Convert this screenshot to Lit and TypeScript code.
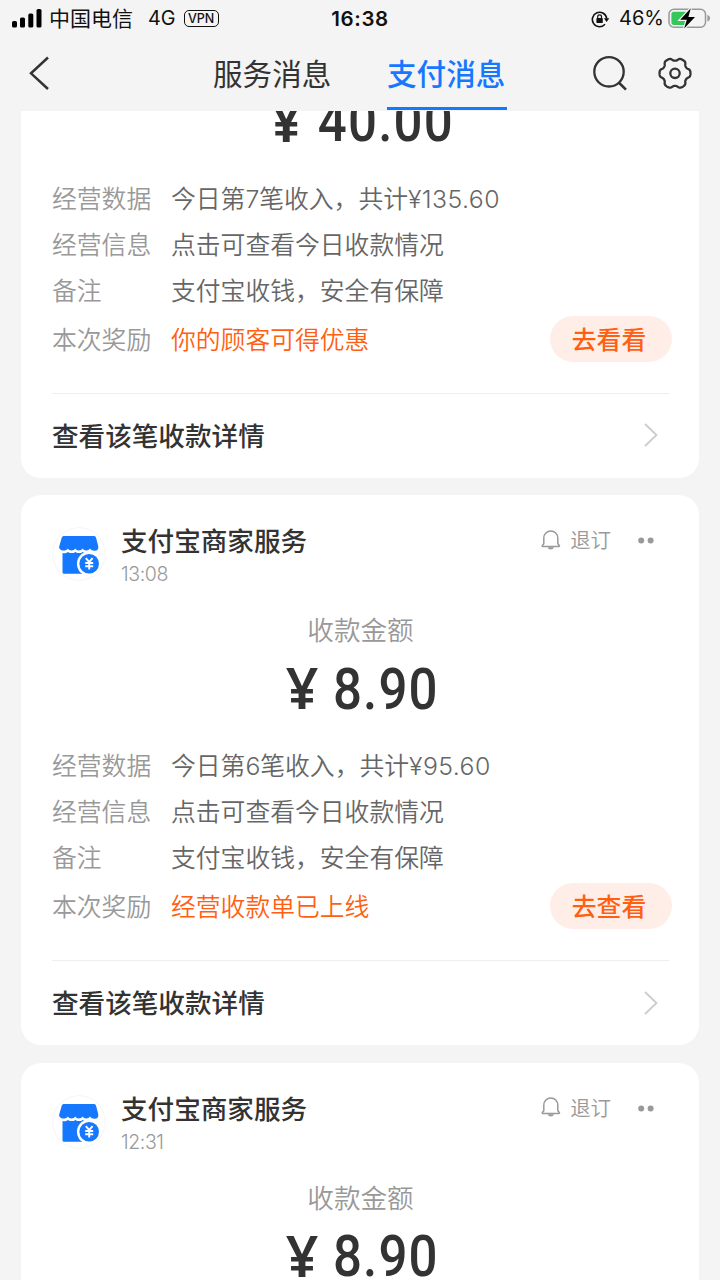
import { LitElement, html, css } from "lit";
import { customElement, property } from "lit/decorators.js";

interface Receipt {
  time: string;
  amount: string;
  summary: string;
  reward: string;
  action: string;
}

const receipts: Receipt[] = [
  { time: "13:26", amount: "40.00", summary: "今日第7笔收入，共计|¥135.60", reward: "你的顾客可得优惠", action: "去看看" },
  { time: "13:08", amount: "8.90", summary: "今日第6笔收入，共计|¥95.60", reward: "经营收款单已上线", action: "去查看" },
  { time: "12:31", amount: "8.90", summary: "今日第5笔收入，共计|¥86.70", reward: "经营收款单已上线", action: "去查看" },
];

/* Gear outline: six wide lobes with narrow notches between them */
const gearPath = (() => {
  let d = "";
  for (let i = 0; i < 180; i++) {
    const a = (i / 180) * Math.PI * 2;
    const r = 13.9 + 1.6 * Math.tanh((Math.cos(6 * a) + 0.3) * 1.6);
    d += `${i ? "L" : "M"}${(17 + r * Math.cos(a)).toFixed(2)} ${(17 + r * Math.sin(a)).toFixed(2)}`;
  }
  return d + "Z";
})();

@customElement("status-bar")
export class StatusBar extends LitElement {
  static styles = css`
    :host { display: flex; height: 37px; align-items: center; box-sizing: border-box; padding: 0 9px 0 12px; color: #111; font-size: 20.5px; }
    svg { display: block; flex: none; }
    .side { flex: 1; display: flex; align-items: center; }
    .right { justify-content: flex-end; }
    .carrier { margin: -3px 0 0 7px; font-size: 21px; line-height: 34px; }
    .net { margin-left: 15px; font: 400 19.8px/37px Inter, sans-serif; }
    .vpn { margin-left: 8px; box-sizing: border-box; width: 35px; height: 17px; border: 1.5px solid #111; border-radius: 5px; font: 500 12.5px/15px Inter, sans-serif; text-align: center; }
    .clock { margin-right: 3px; font: 600 20.5px/37px Inter, sans-serif; letter-spacing: 0.6px; }
    .pct { margin: 0 4px 0 9px; font: 400 20px/37px Inter, sans-serif; }
  `;
  render() {
    return html`
      <div class="side">
        <svg width="30" height="20" viewBox="0 0 30 20" fill="#000">
          <rect x="0" y="12" width="5" height="6.500" rx="1.6" /><rect x="8" y="8.500" width="5" height="10" rx="1.6" />
          <rect x="16.3" y="4.500" width="5" height="14" rx="1.6" /><rect x="24.5" y="0" width="5" height="18.500" rx="1.6" />
        </svg>
        <span class="carrier">中国电信</span><span class="net">4G</span><span class="vpn">VPN</span>
      </div>
      <span class="clock">16:38</span>
      <div class="side right">
        <svg width="19" height="18" viewBox="0 0 19 18" fill="none" stroke="#111" stroke-width="1.6">
          <path d="M14 14.2A7.2 7.2 0 1 1 15.7 8.6" />
          <path d="M12.9 8.3h5.4l-2.700 3.600z" fill="#111" stroke="none" />
          <rect x="5.4" y="8" width="6.4" height="5" rx="0.8" fill="#111" stroke="none" />
          <path d="M6.7 8.4V6.8a1.9 1.9 0 0 1 3.8 0v1.6" stroke-width="1.2" />
        </svg>
        <span class="pct">46%</span>
        <svg width="43" height="22" viewBox="0 0 43 22">
          <rect x="1" y="1.300" width="36.500" height="18" rx="5" fill="none" stroke="#999" stroke-width="1.500" />
          <path d="M6 3.700h12v13.200H6a2.600 2.600 0 0 1-2.600-2.600V6.300A2.600 2.600 0 0 1 6 3.700z" fill="#35c759" />
          <path d="M39.400 7c1.800.6 2.600 1.800 2.600 3.300s-.8 2.700-2.600 3.300z" fill="#999" />
          <path d="M22.800.3 12.200 11.700h6.600l-2.600 8.800L27 8.900h-6.600z" fill="#000" stroke="#f4f4f4" stroke-width="2.400" paint-order="stroke" />
        </svg>
      </div>
    `;
  }
}

@customElement("nav-bar")
export class NavBar extends LitElement {
  static styles = css`
    :host { display: grid; grid-template-columns: 213px 118px 56px 120px 1fr; height: 74px; color: #333; }
    svg { display: block; }
    .back { padding: 19px 0 0 28px; }
    .tab { height: 72.5px; box-sizing: border-box; font-size: 29.6px; line-height: 71px; white-space: nowrap; }
    .active { grid-column: 4; color: #1677ff; font-weight: 500; border-bottom: 3.5px solid #1677ff; }
    .tools { display: flex; justify-content: flex-end; gap: 30px; padding: 18px 28px 0 0; }
  `;
  render() {
    return html`
      <div class="back">
        <svg width="22" height="35" viewBox="0 0 22 35" fill="none" stroke="#333" stroke-width="2.500"><path d="M20 1.500 3 17.300 20 33" /></svg>
      </div>
      <div class="tab">服务消息</div>
      <div class="tab active">支付消息</div>
      <div class="tools">
        <svg width="36" height="36" viewBox="0 0 36 36" fill="none" stroke="#333" stroke-width="2.300"><circle cx="17" cy="16.800" r="14.700" /><path d="M27 27.800 34 34.600" stroke-width="2.600" /></svg>
        <svg width="34" height="36" viewBox="0 -1.300 34 36" fill="none" stroke="#333" stroke-width="2.300" stroke-linejoin="round"><path d=${gearPath} /><circle cx="17" cy="17" r="4.700" /></svg>
      </div>
    `;
  }
}

@customElement("receipt-card")
export class ReceiptCard extends LitElement {
  @property({ attribute: false }) receipt!: Receipt;

  static styles = css`
    :host { display: flex; flex-direction: column; box-sizing: border-box; height: 550px; padding: 27px 30px 0 31px; border-radius: 20px; background: #fff; }
    svg { display: block; flex: none; }
    .head { display: flex; height: 85px; }
    .logo { margin: 5px 15px 0 0; }
    .who { flex: 1; }
    .name { font-size: 26.6px; font-weight: 500; line-height: 36px; color: #333; }
    .time { margin-top: 3px; font: 300 19.5px/27px Inter, sans-serif; color: #999; letter-spacing: -0.4px; }
    .unsub { display: flex; height: 35px; align-items: center; color: #999; font-size: 20.4px; font-weight: 350; }
    .unsub .bell { margin-top: 1px; }
    .unsub .word { margin: -1px 27px 0 9px; }
    .unsub .dots { margin: 1px 15px 0 0; }
    .caption { height: 44px; line-height: 44px; text-align: center; font-size: 26.6px; font-weight: 350; color: #999; }
    .amount { height: 75px; display: flex; justify-content: center; align-items: center; padding-left: 8px; font: 500 58px/74px Roboto, sans-serif; color: #333; transform: scaleX(0.88); }
    .sign { margin: -3px 17px 0 0; font-family: "Noto Sans", sans-serif; font-size: 57px; font-weight: 560; transform: scaleX(1.136); transform-origin: right; }
    .figure { letter-spacing: 1.3px; }
    .row { display: flex; height: 46px; align-items: center; font-size: 24.8px; font-weight: 350; color: #666; white-space: nowrap; line-height: 40px; }
    .first { margin-top: 16px; }
    .label, .value { margin-top: -2px; }
    .label { width: 119px; color: #999; }
    .money, .digit { font-family: Inter, sans-serif; font-weight: 340; line-height: 1; }
    .money { letter-spacing: 0.45px; }
    .digit { letter-spacing: -0.1px; }
    .bonus { margin-top: 3px; color: #ff5f12; }
    .bonus .value { flex: 1; }
    .pill { width: 122px; height: 46px; margin-right: -3px; border-radius: 23px; background: #ffeee8; font-weight: 500; text-align: center; line-height: 45px; text-indent: -4px; }
    .link { display: flex; height: 83px; margin-top: 31px; border-top: 1px solid #eee; justify-content: space-between; align-items: center; padding-right: 11px; font-size: 26.6px; font-weight: 500; color: #333; }
    .link span { margin-top: -2px; }
  `;

  render() {
    const r = this.receipt;
    const [text, money] = r.summary.split("|");
    const [, before, digit, after] = text.match(/^(\D+)(\d)(.*)$/)!;
    return html`
      <div class="head">
        <svg class="logo" width="54" height="54" viewBox="0 0 54 54">
          <circle cx="27" cy="27" r="26.300" fill="#fff" stroke="#f5f5f5" />
          <path d="M12 9h30a2 2 0 0 1 2 1.500L46.300 19.500c.5 3-1.500 4.500-3.800 4.300-2 0-3.500-1-4.500-2.300-1.500 2.600-6 2.600-7.400 0-1.400 2.600-6 2.600-7.400 0-1.400 2.600-6 2.600-7.400 0C14.500 24.500 6.500 24.600 7.200 19.500L9.800 10.500A2 2 0 0 1 12 9z" fill="#1677ff" />
          <path d="M10.500 26c2 .5 4 .1 5.500-1.100 2.200 1.600 5.300 1.600 7.400 0 2.200 1.600 5.300 1.600 7.300 0 2.200 1.600 5.300 1.600 7.300 0 1.500 1.100 3.200 1.500 5 1.200V46.800H12a1.500 1.500 0 0 1-1.500-1.500z" fill="#1677ff" />
          <circle cx="37.200" cy="36.700" r="12.300" fill="#fff" /><circle cx="37.200" cy="36.700" r="9.800" fill="#1677ff" />
          <path d="M33.800 31.200 37.200 35 40.600 31.200M37.200 35V42.600M33.200 36h8M33.200 39.300h8" fill="none" stroke="#fff" stroke-width="1.900" />
        </svg>
        <div class="who">
          <div class="name">支付宝商家服务</div>
          <div class="time">${r.time}</div>
        </div>
        <div class="unsub">
          <svg class="bell" width="20" height="21" viewBox="0 0 20 21" fill="none" stroke="#999" stroke-width="1.500">
            <path d="M2.800 13.800V8a7 7 0 0 1 14 0v5.800l1.500 1.800a.6.6 0 0 1-.5 1H1.800a.6.6 0 0 1-.5-1z" />
            <path d="M6.600 17.200a3.300 2.900 0 0 0 6.400 0z" fill="#999" stroke="none" />
          </svg>
          <span class="word">退订</span>
          <svg class="dots" width="16" height="8" viewBox="0 0 16 8" fill="#999"><circle cx="3.200" cy="4.500" r="3" /><circle cx="12.600" cy="4.500" r="3" /></svg>
        </div>
      </div>
      <div class="caption">收款金额</div>
      <div class="amount"><span class="sign">¥</span><span class="figure">${r.amount}</span></div>
      <div class="row first"><span class="label">经营数据</span><span class="value">${before}<span class="digit">${digit}</span>${after}<span class="money">${money}</span></span></div>
      <div class="row"><span class="label">经营信息</span><span class="value">点击可查看今日收款情况</span></div>
      <div class="row"><span class="label">备注</span><span class="value">支付宝收钱，安全有保障</span></div>
      <div class="row bonus"><span class="label">本次奖励</span><span class="value">${r.reward}</span><span class="pill">${r.action}</span></div>
      <div class="link">
        <span>查看该笔收款详情</span>
        <svg width="14" height="24" viewBox="0 0 14 24" fill="none" stroke="#ccc" stroke-width="1.800"><path d="M1 1 12.500 12 1 23" /></svg>
      </div>
    `;
  }
}

@customElement("app-root")
export class AppRoot extends LitElement {
  static styles = css`
    :host { display: flex; flex-direction: column; width: 720px; height: 1280px; overflow: hidden; background: #f4f4f4; font-family: "Noto Sans CJK SC", sans-serif; }
    .viewport { flex: 1; min-height: 0; overflow: hidden; }
    .feed { display: flex; flex-direction: column; gap: 17.5px; margin: -183.5px 21px 0; }
  `;
  render() {
    return html`
      <status-bar></status-bar>
      <nav-bar></nav-bar>
      <div class="viewport"><div class="feed">${receipts.map((r) => html`<receipt-card .receipt=${r}></receipt-card>`)}</div></div>
    `;
  }
}
